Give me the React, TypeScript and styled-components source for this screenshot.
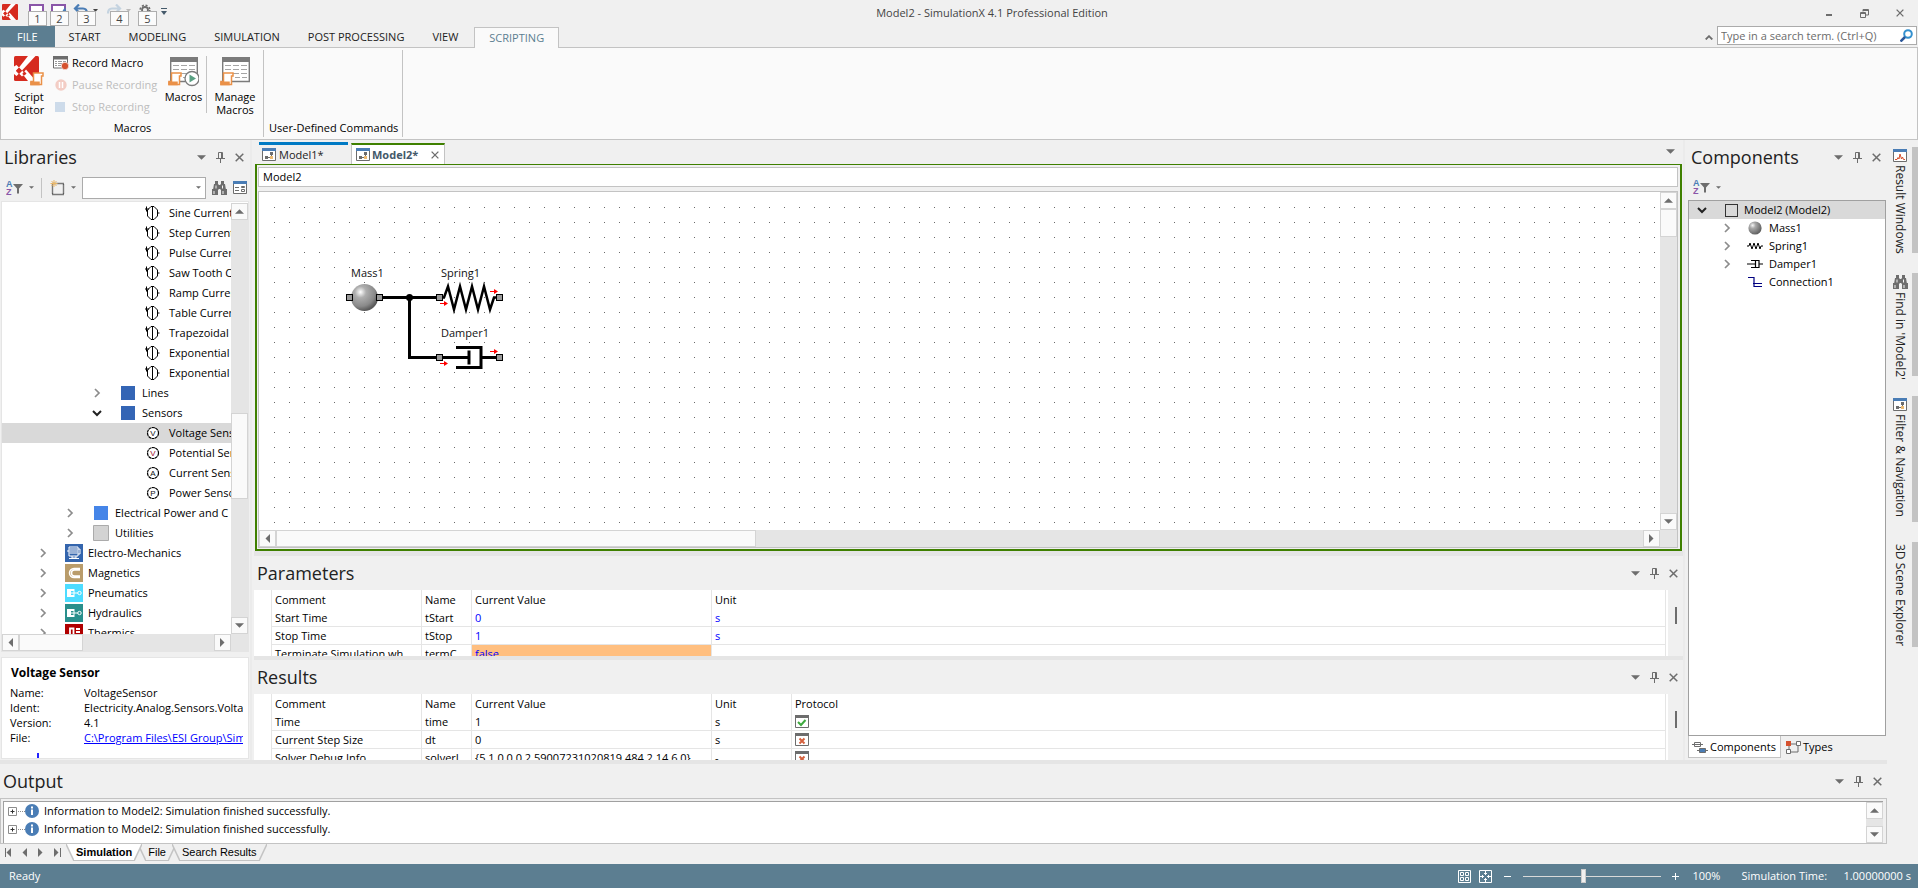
import React from "react";
import styled, { createGlobalStyle, css } from "styled-components";

const UI = `"Open Sans", "Noto Sans", sans-serif`;
const C = {
  chrome: "#f0f0f0",
  panel: "#fafafa",
  line: "#c3c3c3",
  soft: "#e5e5e5",
  steel: "#5c7e91",
  glyph: "#6d6d6d",
  green: "#3f8000",
  blue: "#4a7db5",
};

const Global = createGlobalStyle`
  *, *::before, *::after { box-sizing: border-box; }
  html, body { margin: 0; padding: 0; }
  body { background: ${C.chrome}; font: 11px/14px ${UI}; color: #000; overflow: hidden; }
  button, input { font: inherit; color: inherit; }
  button { background: none; border: 0; padding: 0; margin: 0; white-space: nowrap; }
  svg { display: block; flex: none; }
`;

/* ---------- icons ---------- */
const Caret = ({ s = 9, up = false, color = C.glyph }: { s?: number; up?: boolean; color?: string }) => (
  <svg width={s} height={Math.ceil(s / 2)} viewBox="0 0 10 5">
    <path d={up ? "M0 5L5 0l5 5z" : "M0 0h10L5 5z"} fill={color} />
  </svg>
);
const SideCaret = ({ left = false, bar = false }: { left?: boolean; bar?: boolean }) => (
  <svg width="8" height="9" viewBox="0 0 8 9" fill={C.glyph}>
    <path d={left ? "M6 0v9L1.500 4.500z" : "M1 0v9l4.500-4.500z"} />
    {bar && <path d={left ? "M0 0h1v9H0z" : "M7 0h1v9H7z"} />}
  </svg>
);
const Pin = () => (
  <svg width="9" height="11" viewBox="0 0 9 11" stroke={C.glyph} fill="none">
    <path d="M2.500 6V.5h4V6M5.500 1v5M0 6.500h9M4.500 7v4" />
  </svg>
);
const Cross = ({ s = 9 }: { s?: number }) => (
  <svg width={s} height={s} viewBox="0 0 9 9" stroke={C.glyph} strokeWidth="1.500">
    <path d="M.7.7l7.600 7.600M8.300.7L.7 8.300" />
  </svg>
);
const Chevron = ({ open }: { open?: boolean }) =>
  open ? (
    <svg width="10" height="10" viewBox="0 0 10 10" fill="none" stroke="#222" strokeWidth="2">
      <path d="M1 3l4 4 4-4" />
    </svg>
  ) : (
    <svg width="10" height="10" viewBox="0 0 10 10" fill="none" stroke="#8c8c8c" strokeWidth="1.700">
      <path d="M3 1l4 4-4 4" />
    </svg>
  );
const LogoShape = () => (
  <>
    <rect width="25" height="25" rx="1.500" fill="#d62b1f" />
    <path d="M14 0h7.500L8 14.500l-3-3z" fill="#fff" />
    <path d="M0 10.500l2.500-1.500L5 11.500l-3 3 3 3L2.500 20 0 18z" fill="#fff" />
    <path d="M8 14.500l-3 3 3 3 3-3zM12 13.500L22 25h-8l-5.500-7z" fill="#fff" />
    <path d="M5 12l3 3-3 3-3-3zM10.500 15.500l2 2-2 2-2-2z" fill="#d62b1f" />
  </>
);
const Logo = ({ s }: { s: number }) => (
  <svg width={s} height={s} viewBox="0 0 25 25"><LogoShape /></svg>
);
const Scroll = ({ x, y }: { x: number; y: number }) => (
  <g transform={`translate(${x} ${y})`} fill="#fff" stroke="#ea9148" strokeWidth="1.500">
    <path d="M3.500 1H13v3h-1.500v8.500H1V9.500h2.500z" />
    <path d="M1 10.200h8v2.300H1z" fill="#ea9148" />
  </g>
);
const SheetShape = () => (
  <>
    <path d="M.7 1h26.600v23.500H.7z" fill="#fff" stroke="#7b7b7b" strokeWidth="1.400" />
    <path d="M0 0h28v5H0z" fill="#7b7b7b" />
    <path d="M3 8.500h6m2 0h6m2 0h6M3 12.500h6m2 0h6m2 0h6M3 16.500h6m2 0h6m2 0h6M13 20.500h5m2 0h5" stroke="#a5a5a5" strokeWidth="1.200" />
  </>
);
const ScriptEditorIcon = () => (
  <svg width="30" height="31" viewBox="0 0 30 31">
    <LogoShape />
    <Scroll x={16} y={16} />
  </svg>
);
const MacrosIcon = () => (
  <svg width="31" height="31" viewBox="0 0 31 31">
    <g transform="translate(2 1)"><SheetShape /></g>
    <Scroll x={0} y={16} />
    <circle cx="24" cy="22.500" r="7" fill="#fff" stroke="#7b7b7b" strokeWidth="1.300" />
    <path d="M21.500 18.500v8l6.500-4z" fill="#5aa083" />
  </svg>
);
const ManageIcon = () => (
  <svg width="31" height="31" viewBox="0 0 31 31">
    <g transform="translate(2 1)"><SheetShape /></g>
    <Scroll x={0} y={16} />
  </svg>
);
const RecordIcon = () => (
  <svg width="16" height="14" viewBox="0 0 16 14">
    <path d="M.5.5h14v11.500H.5z" fill="#fff" stroke={C.glyph} />
    <path d="M0 0h15v3.500H0z" fill={C.glyph} />
    <path d="M2 5.500h2m1 0h4m1 0h3M2 7.500h2m1 0h4M2 9.500h2m1 0h3" stroke="#999" />
    <circle cx="12" cy="10" r="3.700" fill="#d5512e" stroke="#fff" strokeWidth=".6" />
  </svg>
);
const PauseIcon = () => (
  <svg width="16" height="12" viewBox="0 0 16 12">
    <circle cx="8" cy="6" r="5.700" fill="#f3cdc5" />
    <path d="M6.500 3v6M9.500 3v6" stroke="#fff" strokeWidth="1.500" />
  </svg>
);
const StopIcon = () => (
  <svg width="16" height="10" viewBox="0 0 16 10"><path d="M2 0h10v10H2z" fill="#cddbea" /></svg>
);
const SaveIcon = ({ as = false }: { as?: boolean }) => (
  <svg width="16" height="14" viewBox="0 0 16 14">
    <path d="M1 1h13v12H1z" fill="#fff" stroke="#8a56a8" strokeWidth="2" />
    {as && <path d="M9 11l5-8 2 7z" fill={C.blue} />}
  </svg>
);
const BackArrow = ({ color, flip }: { color: string; flip?: boolean }) => (
  <svg width="16" height="14" viewBox="0 0 16 14" fill="none" stroke={color} strokeWidth="2.200">
    <g transform={flip ? "matrix(-1 0 0 1 16 0)" : undefined}>
      <path d="M6 .5L2 4.500l4 4M2 4.500h8q4 0 4 5" />
    </g>
  </svg>
);
const TinyDrop = ({ color }: { color: string }) => (
  <svg width="5" height="8" viewBox="0 0 5 8"><path d="M0 5h5L2.500 8z" fill={color} /></svg>
);
const Gear = () => (
  <svg width="12" height="12" viewBox="0 0 12 12" fill="none" stroke={C.glyph}>
    <circle cx="6" cy="6" r="3" strokeWidth="1.800" />
    <circle cx="6" cy="6" r="4.800" strokeWidth="1.600" strokeDasharray="2 1.770" />
  </svg>
);
const SortFilter = () => (
  <svg width="17" height="16" viewBox="0 0 17 16">
    <text x="0" y="7" fontSize="9" fontWeight="700" fill={C.blue} fontFamily="Liberation Sans">A</text>
    <text x="0" y="15" fontSize="9" fontWeight="700" fill="#8a56a8" fontFamily="Liberation Sans">Z</text>
    <path d="M7 4h10l-4 4.500v5h-2v-5z" fill={C.glyph} />
  </svg>
);
const NewBox = () => (
  <svg width="15" height="16" viewBox="0 0 15 16">
    <path d="M2.500 3.500h11v11h-11z" fill="none" stroke="#000" strokeWidth="1.400" strokeDasharray="1 1" />
    <path d="M4 0v7M.5 3.500h7M1.500 1l5 5M6.500 1l-5 5" stroke="#eab768" />
  </svg>
);
const Binoculars = () => (
  <svg width="15" height="14" viewBox="0 0 15 14" fill={C.glyph}>
    <path d="M3 0h3v3H3zM9 0h3v3H9zM2 3h4.500v6H1zM8.500 3H13l1 6H8.500zM6 4h3v4H6zM0 8h6v6H0zM9 8h6v6H9z" />
    <path d="M1.500 10h1v3h-1zM10.500 10h1v3h-1zM3.500 4.500h1v3h-1zM10 4.500h1v3h-1z" fill="#f4f4f4" />
  </svg>
);
const FormIcon = () => (
  <svg width="14" height="13" viewBox="0 0 14 13">
    <path d="M.5.5h13v12H.5z" fill="#fff" stroke={C.glyph} />
    <path d="M0 0h14v3H0z" fill={C.blue} />
    <path d="M2 6.500h4M2 9.500h4M8.500 5.500h3v1h-3zM8.500 8.500h3v2h-3z" fill="none" stroke={C.glyph} />
  </svg>
);
const ModelIcon = () => (
  <svg width="14" height="13" viewBox="0 0 14 13">
    <path d="M.5.5h13v12H.5z" fill="#fff" stroke={C.glyph} />
    <path d="M0 0h14v3H0z" fill={C.blue} />
    <path d="M3 8h3v3H3zM8 4h3v3H8zM6 9h2v1H6zM9 7h1v2H9z" fill={C.glyph} />
    <path d="M8 8h3v3H8z" fill="#eebb72" />
  </svg>
);
const ResultIcon = () => (
  <svg width="14" height="13" viewBox="0 0 14 13">
    <path d="M.5.5h13v12H.5z" fill="#fff" stroke={C.glyph} />
    <path d="M0 0h14v3H0z" fill={C.blue} />
    <path d="M2 10.500h2l1-2 1 1.500 1-5 1.500 5 1-2 1 2.500h1.500" fill="none" stroke="#d5512e" />
  </svg>
);
const SourceIcon = () => (
  <svg width="16" height="14" viewBox="0 0 16 14" fill="none" stroke="#000">
    <path d="M6 .5h3l3.500 3.500v6L9 13.500H6L2.500 10V4zM7.500 0v14M0 3h4M1.500 .5v5M12.500 7H14.500" />
  </svg>
);
const MeterIcon = ({ t, red }: { t: string; red?: boolean }) => (
  <svg width="16" height="14" viewBox="0 0 16 14">
    <circle cx="8" cy="7" r="5.500" fill="#fff" stroke="#000" strokeWidth="1.200" strokeDasharray="3 .450" />
    <text x="8" y="10" fontSize="8" textAnchor="middle" fill={red ? "#a0102c" : "#111"} fontFamily="Liberation Sans">{t}</text>
  </svg>
);
const Square = ({ c, b }: { c: string; b?: string }) => (
  <svg width="18" height="16" viewBox="0 0 18 16">
    {b ? <path d="M1.500.5h15v15h-15z" fill={c} stroke={b} /> : <path d="M2 1h14v14H2z" fill={c} />}
  </svg>
);
const DomainIcon = ({ k }: { k: string }) => (
  <svg width="18" height="18" viewBox="0 0 18 18">
    <rect width="18" height="18" fill={{ em: "#3465ad", mag: "#b99c6b", pn: "#4ddcff", hy: "#298f8c", th: "#b00000" }[k]} />
    {k === "em" && <path d="M4 3h9v9H4zM13 5h2v5h-2M2 7h2M4.500 5h8M4.500 7h8M4.500 9h8M7 12v2h4v-2M4 14.500h10" fill="none" stroke="#fff" />}
    {k === "mag" && <path d="M15 4.500H9a4.500 4.500 0 000 9h6M15 6H9.500a3 3 0 000 6H15" fill="none" stroke="#fff" strokeWidth="1.500" />}
    {(k === "pn" || k === "hy") && (
      <>
        <path d="M2 5h7v2H6v4h3v2H2z" fill="#fff" />
        <path d="M6 9h7M9 5v8" stroke="#fff" />
        <circle cx="14.500" cy="9" r="1.700" fill="none" stroke="#fff" />
      </>
    )}
    {k === "th" && <path d="M5 18V4.500h3.500V18M11 5h4M11 8h4M11 11h4" fill="none" stroke="#fff" strokeWidth="1.800" />}
  </svg>
);
const Ball = () => (
  <svg width="16" height="14" viewBox="0 0 16 14">
    <defs>
      <radialGradient id="ball" cx=".32" cy=".3" r=".75">
        <stop offset="0" stopColor="#f6f6f6" /><stop offset=".3" stopColor="#aaa" /><stop offset="1" stopColor="#5c5c5c" />
      </radialGradient>
    </defs>
    <circle cx="8" cy="7" r="6.600" fill="url(#ball)" />
  </svg>
);
const SpringMini = () => (
  <svg width="16" height="8" viewBox="0 0 16 8" fill="none" stroke="#000"><path d="M0 4h2l1-3 2 6 2-6 2 6 2-6 2 6 1-3h2" /></svg>
);
const DamperMini = () => (
  <svg width="16" height="8" viewBox="0 0 16 8" fill="none" stroke="#000"><path d="M0 4h8M4 .5h8v7H4M8.500 1v6M12 4h4" strokeWidth="1.200" /></svg>
);
const LinkMini = () => (
  <svg width="16" height="12" viewBox="0 0 16 12" fill="none" stroke="#000080"><path d="M1 1.500h6v9h8M6 7.500h9" strokeWidth="1.200" /></svg>
);
const TreeTabIcon = () => (
  <svg width="16" height="12" viewBox="0 0 16 12" fill="#fff" stroke={C.glyph}>
    <path d="M0 3.500h11M2.500 1.500h6v4h-6z" /><path d="M5 9.500h11" /><path d="M7.500 7.500h6v4h-6z" fill={C.blue} />
  </svg>
);
const TypesIcon = () => (
  <svg width="15" height="13" viewBox="0 0 15 13" fill="#fff" stroke={C.glyph}>
    <path d="M3 3h9v8H3z" fill="none" /><path d="M10.500.5h4v4h-4zM.5 8.500h4v4h-4z" /><path d="M0 0h5v5H0z" fill="#d5512e" stroke="none" />
  </svg>
);
const InfoIcon = () => (
  <svg width="14" height="14" viewBox="0 0 14 14">
    <circle cx="7" cy="7" r="7" fill={C.blue} /><path d="M6 2.500h2v2H6zM6 5.500h2V11H6z" fill="#fff" />
  </svg>
);
const Expander = () => (
  <svg width="17" height="18" viewBox="0 0 17 18" fill="none" stroke="#8c8c8c">
    <path d="M.5 5.500h8v8h-8z" fill="#fff" /><path d="M2.500 9.500h4M4.500 7.500v4" stroke="#333" /><path d="M10 9.500h7" strokeDasharray="1 1" />
  </svg>
);
const ProtocolIcon = ({ on }: { on: boolean }) => (
  <svg width="14" height="13" viewBox="0 0 14 13">
    <path d="M.5.5h13v12H.5z" fill="#fff" stroke={C.glyph} /><path d="M0 0h14v3H0z" fill={C.glyph} />
    {on ? <path d="M3 7l3 3 4.500-5" fill="none" stroke="#3faa3f" strokeWidth="2" /> : <path d="M4.500 5.500l5 5M9.500 5.500l-5 5" stroke="#d5613e" strokeWidth="2" />}
  </svg>
);
const Magnifier = () => (
  <svg width="13" height="13" viewBox="0 0 13 13" fill="none">
    <circle cx="8" cy="5" r="3.800" stroke="#3390cf" strokeWidth="2" /><path d="M5 8l-4.500 4.500" stroke="#2b579a" strokeWidth="2.500" />
  </svg>
);

/* ---------- shell ---------- */
const Shell = styled.div`height: 100vh; display: flex; flex-direction: column;`;
const TitleBar = styled.header`
  height: 26px; flex: none; display: grid; grid-template-columns: 1fr auto 1fr; align-items: center;
`;
const WindowTitle = styled.h1`margin: 0; font-size: 11px; font-weight: 400; color: #444; padding-left: 66px; line-height: 24px; padding-bottom: 1px;`;
const Quick = styled.div`display: flex; align-items: flex-start; height: 26px; padding: 4px 0 0 2px; gap: 6px; svg:last-child { margin-left: 2px; }`;
const QuickItem = styled.button<{ $w: number; $tip: number }>`
  position: relative; width: ${(p) => p.$w}px; height: 14px; display: flex; gap: 4px;
  &:nth-child(2) { margin-left: 5px; }
  span { position: absolute; top: 7px; left: ${(p) => p.$tip}px; width: 19px; height: 15px; background: #fbfbfb;
    border: 1px solid #aeaeae; line-height: 13px; text-align: center; color: #444; }
`;
const WindowButtons = styled.div`display: flex; justify-content: flex-end; gap: 27px; padding-right: 14px; align-items: center;`;
const TabRow = styled.nav`display: flex; height: 22px; flex: none; align-items: stretch; position: relative; z-index: 1; margin-bottom: -1px;`;
const RibbonTab = styled.button<{ $kind?: "file" | "active" }>`
  padding: 0 14px; color: #222; line-height: 20px;
  ${(p) => p.$kind === "file" && css`background: ${C.steel}; color: #fff; padding: 0 17px; margin-bottom: 1px;`}
  ${(p) => p.$kind === "active" && css`background: ${C.panel}; color: ${C.steel}; border: 1px solid ${C.line}; border-bottom: 0; margin: 1px 0 0 2px;`}
`;
const TabSpace = styled.div`flex: 1;`;
const Collapse = styled.button`width: 16px; display: grid; place-items: center;`;
const Search = styled.label`
  width: 200px; height: 19px; border: 1px solid #ababab; background: #fff; display: flex; align-items: center; padding: 0 3px; margin-right: 1px;
  input { border: 0; outline: 0; flex: 1; min-width: 0; padding: 0; background: none; }
  input::placeholder { color: #6b6b6b; opacity: 1; }
`;
const Ribbon = styled.section`
  height: 93px; flex: none; border: 1px solid ${C.line}; background: ${C.panel}; display: flex; padding: 2px 0;
`;
const Group = styled.div<{ $w?: number }>`
  width: ${(p) => (p.$w ? p.$w + "px" : "auto")}; border-right: 1px solid ${C.line}; display: flex; flex-direction: column; justify-content: space-between;
`;
const GroupBody = styled.div`display: flex; padding: 6px 0 0 4px;`;
const GroupLabel = styled.div`text-align: center; line-height: 16px; padding: 0 4px 1px 5px;`;
const BigButton = styled.button<{ $w: number }>`
  width: ${(p) => p.$w}px; display: flex; flex-direction: column; align-items: center; gap: 3px; line-height: 13px; white-space: normal;
`;
const SmallStack = styled.div`display: flex; flex-direction: column; width: 108px; margin-top: -4px;`;
const SmallButton = styled.button`
  display: flex; align-items: center; gap: 3px; height: 22px;
  &:disabled { color: #bdbdbd; }
`;
const Rule = styled.i<{ $h: number; $m?: string }>`width: 1px; height: ${(p) => p.$h}px; background: ${C.line}; margin: ${(p) => p.$m || 0};`;

const Work = styled.div`flex: 1; min-height: 0; display: flex;`;
const Docked = styled.div`flex: 1; min-width: 0; display: flex; flex-direction: column;`;
const Upper = styled.div`flex: 1; min-height: 0; display: flex; border-bottom: 4px solid ${C.soft};`;
const Left = styled.aside`width: 250px; flex: none; display: flex; flex-direction: column; padding: 2px 1px 1px;`;
const Splitter = styled.div<{ $w: number }>`width: ${(p) => p.$w}px; flex: none; border-left: 2px solid #ebebeb;`;
const Center = styled.main`flex: 1; min-width: 0; display: flex; flex-direction: column; padding-top: 2px;`;
const Right = styled.aside`width: 199px; flex: none; display: flex; flex-direction: column; padding: 2px 1px 0 0;`;

const PanelHead = styled.header<{ $low?: boolean }>`
  height: ${(p) => (p.$low ? 34 : 33)}px; flex: none; display: flex; align-items: center; padding: 0 5px ${(p) => (p.$low ? 0 : 3)}px 3px;
  h2 { margin: 0; flex: 1; font-weight: 400; font-size: 18px; line-height: 24px; color: #222; }
`;
const HeadButtons = styled.div`display: flex; gap: 10px; align-items: center;`;
const PanelHeader = ({ title, low }: { title: string; low?: boolean }) => (
  <PanelHead $low={low}>
    <h2>{title}</h2>
    <HeadButtons>
      <button aria-label={`${title} menu`}><Caret /></button>
      <button aria-label={`Pin ${title}`}><Pin /></button>
      <button aria-label={`Close ${title}`}><Cross /></button>
    </HeadButtons>
  </PanelHead>
);
const Toolbar = styled.div<{ $h: number }>`
  height: ${(p) => p.$h}px; flex: none; display: flex; align-items: center; gap: 6px; padding: 0 1px 1px 5px;
`;
const Combo = styled.label`
  width: 124px; height: 22px; background: #fff; border: 1px solid #ababab; display: flex; align-items: center; padding: 0 4px;
  input { border: 0; outline: 0; flex: 1; min-width: 0; padding: 0; }
`;

/* ---------- scroll bars ---------- */
const Track = styled.div<{ $v?: boolean }>`
  flex: none; display: flex; background: ${C.soft};
  ${(p) => (p.$v ? "width: 17px; flex-direction: column;" : "height: 17px;")}
`;
const RowSplitter = styled.div`height: 5px; flex: none; background: ${C.soft};`;
const Arrow = styled.button`
  width: 17px; height: 17px; flex: none; display: grid; place-items: center; background: ${C.panel}; border: 1px solid #d4d4d4;
`;
const Thumb = styled.div<{ $f: number }>`flex: ${(p) => p.$f} 1 0; background: ${C.panel}; border: 1px solid #d4d4d4;`;
const Gap = styled.div<{ $f: number }>`flex: ${(p) => p.$f} 1 0;`;
const Bar = ({ v, parts }: { v?: boolean; parts: [number, number, number] }) => (
  <Track $v={v}>
    <Arrow aria-label={v ? "Scroll up" : "Scroll left"}>{v ? <Caret up /> : <SideCaret left />}</Arrow>
    <Gap $f={parts[0]} />
    {parts[1] > 0 && <Thumb $f={parts[1]} />}
    <Gap $f={parts[2]} />
    <Arrow aria-label={v ? "Scroll down" : "Scroll right"}>{v ? <Caret /> : <SideCaret />}</Arrow>
  </Track>
);

/* ---------- trees ---------- */
const LibBox = styled.div`flex: 1; min-height: 0; border: 1px solid ${C.soft}; background: #fff; display: flex; flex-direction: column; padding-top: 1px;`;
const LibView = styled.div`flex: 1; min-height: 0; display: flex;`;
const TreeList = styled.ul`list-style: none; margin: 0; padding: 0; flex: 1; min-width: 0; overflow: hidden;`;
const LibRow = styled.li<{ $level: number; $on?: boolean }>`
  height: 20px; display: flex; align-items: center; white-space: nowrap; padding-left: ${(p) => 36 + 27 * p.$level}px;
  background: ${(p) => (p.$on ? "#d9d9d9" : "none")};
`;
const Slot = styled.span<{ $w: number }>`width: ${(p) => p.$w}px; flex: none; display: flex;`;
const HBarWrap = styled.div`padding-right: 17px; background: ${C.soft};`;

const library: { level: number; name: string; icon: React.ReactNode; open?: boolean; leaf?: boolean; on?: boolean }[] = [
  ...["Sine Current", "Step Current", "Pulse Current", "Saw Tooth C", "Ramp Current", "Table Current", "Trapezoidal", "Exponential", "Exponential"].map(
    (name) => ({ level: 3, name, icon: <SourceIcon />, leaf: true }),
  ),
  { level: 2, name: "Lines", icon: <Square c="#3465b5" /> },
  { level: 2, name: "Sensors", icon: <Square c="#3465b5" />, open: true },
  { level: 3, name: "Voltage Sens", icon: <MeterIcon t="V" />, leaf: true, on: true },
  { level: 3, name: "Potential Sen", icon: <MeterIcon t="V" red />, leaf: true },
  { level: 3, name: "Current Sens", icon: <MeterIcon t="A" />, leaf: true },
  { level: 3, name: "Power Senso", icon: <MeterIcon t="P" />, leaf: true },
  { level: 1, name: "Electrical Power and C", icon: <Square c="#4585e8" /> },
  { level: 1, name: "Utilities", icon: <Square c="#d3d3d3" b="#ababab" /> },
  { level: 0, name: "Electro-Mechanics", icon: <DomainIcon k="em" /> },
  { level: 0, name: "Magnetics", icon: <DomainIcon k="mag" /> },
  { level: 0, name: "Pneumatics", icon: <DomainIcon k="pn" /> },
  { level: 0, name: "Hydraulics", icon: <DomainIcon k="hy" /> },
  { level: 0, name: "Thermics", icon: <DomainIcon k="th" /> },
];

const Info = styled.section`
  height: 102px; flex: none; margin-top: 5px; border: 1px solid ${C.soft}; background: #fff; padding: 8px 5px 0 8px; overflow: hidden;
  h3 { margin: 0 0 5px; font-size: 12px; line-height: 14px; font-weight: 700; padding-left: 1px; }
  dl { margin: 0; display: grid; grid-template-columns: 74px 1fr; line-height: 15px; }
  dd { margin: 0; overflow: hidden; white-space: nowrap; }
  a { color: #00f; }
`;
const Mark = styled.i`display: block; width: 2px; height: 5px; background: #22f; margin: 8px 0 0 27px;`;

/* ---------- documents ---------- */
const DocTabs = styled.div`display: flex; height: 22px; flex: none; padding: 0 8px 0 5px; gap: 3px; align-items: flex-end;`;
const DocTab = styled.button<{ $on?: boolean }>`
  display: flex; align-items: center; gap: 3px; padding: 0 3px; height: 22px; width: 89px; border-top: 3px solid #007ac4; color: #222;
  ${(p) => p.$on && css`background: #fff; width: 94px; height: 21px; border: 1px solid ${C.line}; border-top: 2px solid ${C.green}; border-bottom: 0; font-weight: 700; color: #44596a; padding: 0 5px 0 4px; gap: 2px;`}
  svg:last-child:not(:first-child) { margin-left: auto; }
`;
const DocMenu = styled.button`height: 22px; padding-bottom: 4px;`;
const Frame = styled.section`
  flex: 1; min-height: 0; margin: 0 1px 0 1px; border: 2px solid ${C.green}; border-top-width: 1px;
  display: flex; flex-direction: column; padding: 2px 2px 1px 1px; gap: 4px;
`;
const PathBox = styled.div`height: 20px; flex: none; background: #fff; border: 1px solid ${C.line}; padding: 0 4px; line-height: 18px;`;
const CanvasBox = styled.div`flex: 1; min-height: 0; display: flex; flex-direction: column; border: 1px solid ${C.line}; background: #fff;`;
const CanvasRow = styled.div`flex: 1; min-height: 0; display: flex; overflow: hidden;`;
const Canvas = styled.div`flex: 1; min-width: 0; overflow: hidden;`;

const Port = ({ x, y }: { x: number; y: number }) => <rect x={x - 2.5} y={y - 2.5} width="6" height="6" fill="#999" stroke="#000" />;
const Flow = ({ x, y }: { x: number; y: number }) => (
  <g>
    <path d={`M${x} ${y}h5`} stroke="#f00" strokeWidth="1" />
    <path d={`M${x + 4} ${y - 2.5}l4 2.500l-4 2.500z`} fill="#f00" />
  </g>
);
const Diagram = () => (
  <svg width="100%" height="100%" fontFamily="Open Sans" fontSize="11">
    <defs>
      <pattern id="dots" width="15" height="15" patternUnits="userSpaceOnUse"><rect width="1" height="1" fill="#6a6a6a" /></pattern>
      <radialGradient id="mass" cx=".35" cy=".3" r=".7">
        <stop offset="0" stopColor="#fff" /><stop offset=".3" stopColor="#aeaeae" /><stop offset=".75" stopColor="#8a8a8a" /><stop offset="1" stopColor="#5a5a5a" />
      </radialGradient>
    </defs>
    <svg x="15" y="15"><rect width="100%" height="100%" fill="url(#dots)" /></svg>
    <text x="92" y="85" fill="#111">Mass1</text>
    <text x="182" y="85" fill="#111">Spring1</text>
    <text x="182" y="145" fill="#111">Damper1</text>
    <g fill="none" stroke="#000" strokeWidth="3">
      <path d="M123 105.500h57M150.500 105.500v60h30" />
      <path d="M181 105.500h4l4-11 6 23 6-23 6 23 6-23 6 23 6-23 6 23 4-12h5" strokeWidth="2.500" />
      <path d="M182 165.500h28M197 155.500h25v20h-25M222 165.500h18M210 158.500v14" />
    </g>
    <circle cx="150.500" cy="105.500" r="3.500" />
    <circle cx="105.500" cy="105.500" r="13.500" fill="url(#mass)" />
    <Port x={90} y={105} /><Port x={120} y={105} /><Port x={180} y={105} /><Port x={240} y={105} />
    <Port x={180} y={165} /><Port x={240} y={165} />
    <Flow x={181} y={111.5} /><Flow x={231} y={99.5} /><Flow x={181} y={171.5} /><Flow x={231} y={159.5} />
  </svg>
);

/* ---------- value tables ---------- */
const TablePanel = styled.section<{ $last?: boolean }>`
  height: ${(p) => (p.$last ? 100 : 104)}px; flex: none; display: flex; flex-direction: column;
  border-bottom: ${(p) => (p.$last ? "0" : `4px solid ${C.soft}`)};
`;
const TableBody = styled.div`flex: 1; min-height: 0; display: flex; overflow: hidden; background: #fff;`;
const TableClip = styled.div`flex: 1; min-width: 0; margin-left: 17px; margin-right: 2px; overflow: hidden;`;
const Table = styled.table`
  border-collapse: separate; border-spacing: 0; width: 100%; table-layout: fixed; border-right: 1px solid ${C.soft};
  th, td { height: 18px; padding: 0 3px; text-align: left; font-weight: 400; line-height: 17px; white-space: nowrap; overflow: hidden; border-left: 1px solid ${C.soft}; }
  tbody tr:not(:first-child) td { border-top: 1px solid ${C.soft}; }
`;
const Col = styled.col<{ $w: number }>`width: ${(p) => p.$w}px;`;
const Value = styled.td<{ $blue?: boolean; $warn?: boolean }>`
  color: ${(p) => (p.$blue ? "#00f" : "#000")}; background: ${(p) => (p.$warn ? "#ffbf80" : "none")};
`;
const Grip = styled.div`
  width: 15px; background: ${C.chrome}; padding: 17px 0 0 7px;
  &::before { content: ""; display: block; width: 2px; height: 17px; background: ${C.glyph}; }
`;

function ValueTable({ title, rows, last }: { title: string; last?: boolean; rows: (string | boolean)[][] }) {
  const edit = !last;
  return (
    <TablePanel $last={last}>
      <PanelHeader title={title} low />
      <TableBody>
        <TableClip>
          <Table>
            <colgroup>
              <Col $w={150} /><Col $w={50} /><Col $w={240} />
              {last && <Col $w={80} />}
              <col />
            </colgroup>
            <thead>
              <tr><th>Comment</th><th>Name</th><th>Current Value</th><th>Unit</th>{last && <th>Protocol</th>}</tr>
            </thead>
            <tbody>
              {rows.map((r) => (
                <tr key={String(r[0])}>
                  <td>{r[0]}</td><td>{r[1]}</td>
                  <Value $blue={edit} $warn={r[2] === "false"}>{r[2]}</Value>
                  <Value $blue={edit}>{r[3]}</Value>
                  {last && <td><ProtocolIcon on={r[4] === true} /></td>}
                </tr>
              ))}
            </tbody>
          </Table>
        </TableClip>
        <Grip />
      </TableBody>
    </TablePanel>
  );
}

/* ---------- components panel ---------- */
const CompTree = styled(TreeList)`flex: 1; min-height: 0; background: #fff; border: 1px solid #a0a0a0;`;
const CompRow = styled.li<{ $root?: boolean }>`
  height: 18px; display: flex; align-items: center; padding-left: ${(p) => (p.$root ? 8 : 33)}px;
  background: ${(p) => (p.$root ? "#d9d9d9" : "none")};
`;
const RootBox = styled.i`width: 13px; height: 13px; border: 1px solid #333;`;
const BottomTabs = styled.div`height: 24px; flex: none; display: flex; align-items: flex-start;`;
const BottomTab = styled.button<{ $on?: boolean }>`
  height: 22px; display: flex; align-items: center; gap: 2px; padding: 0 6px 0 5px;
  ${(p) => p.$on && css`background: #fff; border: 1px solid ${C.line}; border-top: 0; padding: 0 4px 0 3px;`}
`;

const Strip = styled.nav`width: 31px; flex: none; display: flex; flex-direction: column; align-items: flex-end; gap: 20px; padding-top: 7px;`;
const StripTab = styled.button<{ $h: number }>`
  height: ${(p) => p.$h}px; width: 30px; border-right: 6px solid ${C.line}; display: flex; flex-direction: column; align-items: center; gap: 3px; padding-top: 2px;
  span { writing-mode: vertical-rl; font-size: 12px; line-height: 16px; color: #222; }
`;

/* ---------- output ---------- */
const Output = styled.section`flex: none; display: flex; flex-direction: column;`;
const OutBox = styled.div`border: 1px solid ${C.line}; padding: 2px 3px 1px 2px; height: 46px;`;
const OutInner = styled.div`border: 1px solid #a0a0a0; border-width: 1px 0 0 1px; background: #fff; display: flex; height: 42px;`;
const OutList = styled.ul`list-style: none; margin: 0; padding: 0 0 0 4px; flex: 1;`;
const OutRow = styled.li`height: 18px; display: flex; align-items: center; gap: 5px; svg:first-child { margin-right: -5px; }`;
const SheetTabs = styled.div`
  height: 20px; display: flex; align-items: flex-start; padding-left: 5px; font-family: "Liberation Sans", Arial, sans-serif; font-size: 11px;
`;
const SheetNav = styled.div`display: flex; gap: 8px; padding: 4px 4px 0 0; width: 61px;`;
const SheetTab = styled.button<{ $on?: boolean }>`
  display: flex; height: 17px; margin-right: -4px; line-height: 16px; position: relative; z-index: ${(p) => (p.$on ? 1 : 0)};
  font-weight: ${(p) => (p.$on ? 700 : 400)};
  span { background: ${(p) => (p.$on ? "#fff" : C.chrome)}; border-bottom: 1px solid ${C.line}; padding: 0 2px; }
`;
const Sheet = ({ on, children }: { on?: boolean; children: string }) => {
  const f = on ? "#fff" : C.chrome;
  return (
    <SheetTab $on={on}>
      <svg width="8" height="17"><path d="M0 0h8v17z" fill={f} /><path d="M0 0l8 17" stroke={C.line} strokeWidth="1.500" /></svg>
      <span>{children}</span>
      <svg width="8" height="17"><path d="M0 0h8L0 17z" fill={f} /><path d="M8 0L0 17" stroke={C.line} strokeWidth="1.500" /></svg>
    </SheetTab>
  );
};

/* ---------- status bar ---------- */
const Status = styled.footer`
  height: 24px; flex: none; background: ${C.steel}; color: #fff; display: flex; align-items: center; padding: 0 7px 0 9px;
`;
const StatusText = styled.span<{ $ml?: number; $w?: number }>`margin-left: ${(p) => p.$ml || 0}px; width: ${(p) => (p.$w ? p.$w + "px" : "auto")};`;
const ZoomBox = styled.div`display: flex; align-items: center; gap: 8px; margin-left: auto; svg { stroke: #fff; fill: none; }`;
const Slider = styled.input`
  appearance: none; width: 138px; height: 14px; margin: 0 2px; background: linear-gradient(#d9d9d9, #d9d9d9) center / 100% 1px no-repeat;
  &::-webkit-slider-thumb { appearance: none; width: 5px; height: 14px; background: #f0f0f0; border: 1px solid #ccc; }
`;

export default function App() {
  return (
    <Shell>
      <Global />
      <TitleBar>
        <Quick>
          <Logo s={16} />
          <QuickItem $w={16} $tip={-1}><SaveIcon /><span>1</span></QuickItem>
          <QuickItem $w={16} $tip={-1}><SaveIcon as /><span>2</span></QuickItem>
          <QuickItem $w={27} $tip={4}><BackArrow color={C.blue} /><TinyDrop color="#444" /><span>3</span></QuickItem>
          <QuickItem $w={27} $tip={4}><BackArrow color="#c4d3e0" flip /><TinyDrop color="#bbb" /><span>4</span></QuickItem>
          <QuickItem $w={14} $tip={-1}><Gear /><span>5</span></QuickItem>
          <svg width="6" height="12" viewBox="0 0 6 12" fill="#44596a"><path d="M0 4h6v1H0zM0 7h6L3 11z" /></svg>
        </Quick>
        <WindowTitle>Model2 - SimulationX 4.1 Professional Edition</WindowTitle>
        <WindowButtons>
          <button aria-label="Minimize"><svg width="8" height="8"><path d="M1 5h6v2H1z" fill={C.glyph} /></svg></button>
          <button aria-label="Restore">
            <svg width="9" height="9" viewBox="0 0 9 9" fill="none" stroke={C.glyph}><path d="M.5 3.500h5v5h-5zM.5 4.500h5M3 2.500v-2h5.500V6H6M3 1.500h5" /></svg>
          </button>
          <button aria-label="Close window"><Cross s={8} /></button>
        </WindowButtons>
      </TitleBar>
      <TabRow>
        <RibbonTab $kind="file">FILE</RibbonTab>
        {["START", "MODELING", "SIMULATION", "POST PROCESSING", "VIEW"].map((t) => <RibbonTab key={t}>{t}</RibbonTab>)}
        <RibbonTab $kind="active">SCRIPTING</RibbonTab>
        <TabSpace />
        <Collapse aria-label="Collapse ribbon">
          <svg width="8" height="5" viewBox="0 0 8 5" fill="none" stroke={C.glyph} strokeWidth="1.800"><path d="M.7 4.500L4 1.200l3.300 3.300" /></svg>
        </Collapse>
        <Search><input aria-label="Search" placeholder="Type in a search term. (Ctrl+Q)" /><Magnifier /></Search>
      </TabRow>
      <Ribbon>
        <Group $w={263}>
          <GroupBody>
            <BigButton $w={48}><ScriptEditorIcon />Script<br />Editor</BigButton>
            <SmallStack>
              <SmallButton><RecordIcon />Record Macro</SmallButton>
              <SmallButton disabled><PauseIcon />Pause Recording</SmallButton>
              <SmallButton disabled><StopIcon />Stop Recording</SmallButton>
            </SmallStack>
            <BigButton $w={45}><MacrosIcon />Macros</BigButton>
            <Rule $h={57} />
            <BigButton $w={56}><ManageIcon />Manage<br />Macros</BigButton>
          </GroupBody>
          <GroupLabel>Macros</GroupLabel>
        </Group>
        <Group>
          <span />
          <GroupLabel>User-Defined Commands</GroupLabel>
        </Group>
      </Ribbon>

      <Work>
        <Docked>
          <Upper>
            <Left>
              <PanelHeader title="Libraries" />
              <Toolbar $h={26}>
                <SortFilter /><Caret s={5} />
                <Rule $h={20} $m="0 2px 0 1px" />
                <NewBox /><Caret s={5} />
                <Combo><input aria-label="Search libraries" /><Caret s={5} /></Combo>
                <Binoculars /><FormIcon />
              </Toolbar>
              <LibBox>
                <LibView>
                  <TreeList>
                    {library.map((n, i) => (
                      <LibRow key={i} $level={n.level} $on={n.on}>
                        <Slot $w={n.leaf ? 26 : 27}>{!n.leaf && <Chevron open={n.open} />}</Slot>
                        <Slot $w={n.leaf ? 24 : 23}>{n.icon}</Slot>
                        {n.name}
                      </LibRow>
                    ))}
                  </TreeList>
                  <Bar v parts={[194, 84, 119]} />
                </LibView>
                <HBarWrap><Bar parts={[0, 63, 132]} /></HBarWrap>
              </LibBox>
              <Info>
                <h3>Voltage Sensor</h3>
                <dl>
                  <dt>Name:</dt><dd>VoltageSensor</dd>
                  <dt>Ident:</dt><dd>Electricity.Analog.Sensors.Volta</dd>
                  <dt>Version:</dt><dd>4.1</dd>
                  <dt>File:</dt><dd><a href="#file">C:\Program Files\ESI Group\Sim</a></dd>
                </dl>
                <Mark />
              </Info>
            </Left>
            <Splitter $w={4} />
            <Center>
              <DocTabs>
                <DocTab><ModelIcon />Model1*</DocTab>
                <DocTab $on><ModelIcon />Model2*<Cross s={8} /></DocTab>
                <TabSpace />
                <DocMenu aria-label="Open documents"><Caret /></DocMenu>
              </DocTabs>
              <Frame>
                <PathBox>Model2</PathBox>
                <CanvasBox>
                  <CanvasRow>
                    <Canvas><Diagram /></Canvas>
                    <Bar v parts={[0, 26, 278]} />
                  </CanvasRow>
                  <HBarWrap><Bar parts={[0, 478, 888]} /></HBarWrap>
                </CanvasBox>
              </Frame>
              <RowSplitter />
              <ValueTable
                title="Parameters"
                rows={[["Start Time", "tStart", "0", "s"], ["Stop Time", "tStop", "1", "s"], ["Terminate Simulation wh", "termC", "false", ""]]}
              />
              <ValueTable
                last
                title="Results"
                rows={[
                  ["Time", "time", "1", "s", true],
                  ["Current Step Size", "dt", "0", "s", false],
                  ["Solver Debug Info", "solverI", "{5,1,0,0,0,2.59007231020819,484,2,14,6,0}", "-", false],
                ]}
              />
            </Center>
            <Splitter $w={5} />
            <Right>
              <PanelHeader title="Components" />
              <Toolbar $h={25}><SortFilter /><Caret s={5} /></Toolbar>
              <CompTree>
                <CompRow $root><Slot $w={28}><Chevron open /></Slot><Slot $w={19}><RootBox /></Slot>Model2 (Model2)</CompRow>
                <CompRow><Slot $w={25}><Chevron /></Slot><Slot $w={22}><Ball /></Slot>Mass1</CompRow>
                <CompRow><Slot $w={25}><Chevron /></Slot><Slot $w={22}><SpringMini /></Slot>Spring1</CompRow>
                <CompRow><Slot $w={25}><Chevron /></Slot><Slot $w={22}><DamperMini /></Slot>Damper1</CompRow>
                <CompRow><Slot $w={25} /><Slot $w={22}><LinkMini /></Slot>Connection1</CompRow>
              </CompTree>
              <BottomTabs>
                <BottomTab $on><TreeTabIcon />Components</BottomTab>
                <BottomTab><TypesIcon />Types</BottomTab>
              </BottomTabs>
            </Right>
          </Upper>
          <Output>
            <PanelHeader title="Output" low />
            <OutBox>
              <OutInner>
                <OutList>
                  {[0, 1].map((i) => (
                    <OutRow key={i}><Expander /><InfoIcon />Information to Model2: Simulation finished successfully.</OutRow>
                  ))}
                </OutList>
                <Bar v parts={[1, 0, 1]} />
              </OutInner>
            </OutBox>
            <SheetTabs>
              <SheetNav>
                <button aria-label="First"><SideCaret left bar /></button>
                <button aria-label="Previous"><SideCaret left /></button>
                <button aria-label="Next"><SideCaret /></button>
                <button aria-label="Last"><SideCaret bar /></button>
              </SheetNav>
              <Sheet on>Simulation</Sheet><Sheet>File</Sheet><Sheet>Search Results</Sheet>
            </SheetTabs>
          </Output>
        </Docked>
        <Strip>
          <StripTab $h={106}><ResultIcon /><span>Result Windows</span></StripTab>
          <StripTab $h={103}><Binoculars /><span>Find in 'Model2'</span></StripTab>
          <StripTab $h={126}><ModelIcon /><span>Filter &amp; Navigation</span></StripTab>
          <StripTab $h={105}><span>3D Scene Explorer</span></StripTab>
        </Strip>
      </Work>

      <Status>
        <StatusText>Ready</StatusText>
        <ZoomBox>
          <svg width="13" height="13" viewBox="0 0 13 13"><path d="M.5.5h12v12H.5zM2.500 2.500h3v3h-3zM7.500 2.500h3v3h-3zM2.500 7.500h3v3h-3zM7.500 7.500h3v3h-3z" /></svg>
          <svg width="13" height="13" viewBox="0 0 13 13"><path d="M.5.5h12v12H.5zM6.500 1v4M6.500 8v4M1 6.500h4M8 6.500h4M5 3.500h3M5 9.500h3M3.500 5v3M9.500 5v3" /></svg>
          <button aria-label="Zoom out"><svg width="13" height="13"><path d="M4 6.500h7" /></svg></button>
          <Slider type="range" aria-label="Zoom" defaultValue={43} />
          <button aria-label="Zoom in"><svg width="9" height="13"><path d="M1 6.500h7M4.500 3v7" /></svg></button>
        </ZoomBox>
        <StatusText $ml={12} $w={49}>100%</StatusText>
        <StatusText $w={102}>Simulation Time:</StatusText>
        <StatusText>1.00000000 s</StatusText>
      </Status>
    </Shell>
  );
}
